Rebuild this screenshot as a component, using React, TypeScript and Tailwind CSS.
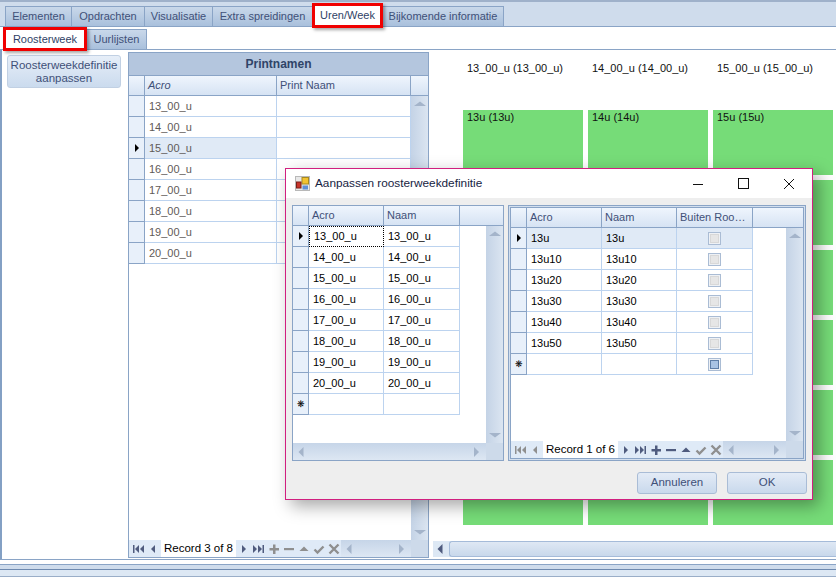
import React from "react";

const DARK = "#4f5b7e";
const GREY = "#8f8f8f";

function NavIcon({ kind, color }: { kind: string; color: string }) {
  const shapes: Record<string, React.ReactNode> = {
    first: <path d="M1 2h1.500v8H1zM7 2v8L3 6zM12 2v8L8 6z" fill={color} />,
    prev: <path d="M8 2v8L4 6z" fill={color} />,
    next: <path d="M4 2v8l4-4z" fill={color} />,
    last: <path d="M0 2v8l4-4zM5 2v8l4-4zM9.500 2H11v8H9.500z" fill={color} />,
    plus: <path d="M5 1.500h2.500V5H11v2.500H7.500V11H5V7.500H1.500V5H5z" fill={color} />,
    minus: <path d="M1 5h10v2.200H1z" fill={color} />,
    up: <path d="M6 3.500l4.500 4.500h-9z" fill={color} />,
    check: <path d="M1.500 6.500l3 3 6-6" stroke={color} strokeWidth="2.400" fill="none" />,
    x: <path d="M1.500 1.500l9 9m0-9l-9 9" stroke={color} strokeWidth="2.400" fill="none" />,
  };
  return (
    <span className="w-[15px] h-full flex items-center justify-center shrink-0">
      <svg width="12" height="12" viewBox="0 0 12 12">{shapes[kind]}</svg>
    </span>
  );
}

function Arrow({ dir, color = "#a4b4ca" }: { dir: "l" | "r" | "u" | "d"; color?: string }) {
  const d = {
    l: "M7.500 1v10L2.500 6z",
    r: "M3 1v10l5-5z",
    u: "M6 3.500L12 8H0z",
    d: "M6 8.500L12 4H0z",
  }[dir];
  return (
    <svg width="12" height="12" viewBox="0 0 12 12" className="shrink-0">
      <path d={d} fill={color} />
    </svg>
  );
}

function Nav({
  label,
  scrollW,
  colors,
}: {
  label: string;
  scrollW: string;
  colors: string[];
}) {
  return (
    <div className="h-[17px] flex shrink-0 items-stretch">
      <div className="w-[32px] flex bg-[#dfeaf7] pl-px">
        <NavIcon kind="first" color={colors[0]} />
        <NavIcon kind="prev" color={colors[1]} />
      </div>
      <div className="w-[75px] bg-white text-black flex items-center justify-center whitespace-nowrap text-[11.500px]">
        {label}
      </div>
      <div className="w-[105px] flex bg-[#dfeaf7]">
        {["next", "last", "plus", "minus", "up", "check", "x"].map((k, i) => (
          <NavIcon key={k} kind={k} color={colors[i + 2]} />
        ))}
      </div>
      <HScroll className={scrollW} />
      <Corner />
    </div>
  );
}

function HScroll({ className }: { className: string }) {
  return (
    <div
      className={`${className} h-full flex items-center justify-between px-[3px] bg-linear-to-b from-[#c6d5e8] to-[#dde7f3]`}
    >
      <Arrow dir="l" />
      <Arrow dir="r" />
    </div>
  );
}

function Corner() {
  return <div className="w-[17px] h-full shrink-0 bg-[#cddaea]" />;
}

function VScroll() {
  return (
    <div className="w-[17px] shrink-0 flex flex-col justify-between items-center py-[2px] bg-linear-to-r from-[#c4d3e6] to-[#dbe5f1]">
      <Arrow dir="u" />
      <Arrow dir="d" />
    </div>
  );
}

function HeadCell({ w, children, italic }: { w: string; children?: React.ReactNode; italic?: boolean }) {
  return (
    <div
      className={`${w} shrink-0 h-full border-r border-[#8aa4c6] pl-[3px] flex items-center text-[#3f5078] whitespace-nowrap ${italic ? "italic" : ""}`}
    >
      {children}
    </div>
  );
}

function Header({ children }: { children: React.ReactNode }) {
  return (
    <div className="h-[20px] shrink-0 flex border-b border-[#8aa4c6] bg-linear-to-b from-[#eff5fd] to-[#d6e3f3]">
      {children}
    </div>
  );
}

function Indicator({ mark }: { mark?: "cur" | "new" }) {
  return (
    <div className="w-[16px] shrink-0 h-full bg-[#e8f0fa] border-r border-b border-[#8aa4c6] flex items-center justify-center">
      {mark === "cur" && (
        <svg width="6" height="8" viewBox="0 0 6 8">
          <path d="M1 0v8l4-4z" fill="#000" />
        </svg>
      )}
      {mark === "new" && <span className="text-[9px] leading-none text-black">❋</span>}
    </div>
  );
}

function Cell({ w, children, bg, focus, color }: { w: string; children?: React.ReactNode; bg?: string; focus?: boolean; color?: string }) {
  return (
    <div
      className={`${w} shrink-0 h-full border-r border-b border-[#bcd3ef] flex items-center pl-[4px] whitespace-nowrap ${bg ?? ""} ${color ?? "text-black"} ${focus ? "border border-dotted border-black" : ""}`}
    >
      {children}
    </div>
  );
}

function Check({ on }: { on?: boolean }) {
  return (
    <div className="w-[13px] h-[13px] border border-[#aabcd4] p-px bg-[#eef1f5]">
      <div className={`w-full h-full border ${on ? "bg-[#a9c3e3] border-[#5f7ea6]" : "bg-[#e6e6e6] border-[#d8d8d8]"}`} />
    </div>
  );
}

const HOURS = ["13_00_u", "14_00_u", "15_00_u", "16_00_u", "17_00_u", "18_00_u", "19_00_u", "20_00_u"];
const SUBS = ["13u", "13u10", "13u20", "13u30", "13u40", "13u50"];

function PrintGrid() {
  return (
    <div className="mt-[2px] h-[506px] w-[301px] shrink-0 border border-[#8aa4c6] flex flex-col bg-white">
      <div className="h-[23px] shrink-0 bg-[#b4c6de] border-b border-[#8aa4c6] flex items-center justify-center font-bold text-[#2f4468] text-[12px]">
        Printnamen
      </div>
      <Header>
        <HeadCell w="w-[16px]" />
        <HeadCell w="w-[132px]" italic>
          Acro
        </HeadCell>
        <HeadCell w="w-[134px]">Print Naam</HeadCell>
      </Header>
      <div className="flex-1 flex min-h-0">
        <div className="flex-1">
          {HOURS.map((h, i) => (
            <div key={h} className="h-[21px] flex">
              <Indicator mark={i === 2 ? "cur" : undefined} />
              <Cell w="w-[132px]" bg={i === 2 ? "bg-[#e0eaf6]" : ""} color="text-[#5f5a58]">
                {h}
              </Cell>
              <Cell w="w-[134px]" />
            </div>
          ))}
        </div>
        <VScroll />
      </div>
      <Nav
        label="Record 3 of 8"
        scrollW="w-[70px]"
        colors={[DARK, DARK, DARK, DARK, GREY, GREY, GREY, GREY, GREY]}
      />
    </div>
  );
}

function DialogLeftGrid() {
  return (
    <div className="w-[212px] h-[256px] shrink-0 border border-[#8aa4c6] flex flex-col bg-white">
      <Header>
        <HeadCell w="w-[16px]" />
        <HeadCell w="w-[75px]">Acro</HeadCell>
        <HeadCell w="w-[76px]">Naam</HeadCell>
      </Header>
      <div className="flex-1 flex min-h-0">
        <div className="flex-1">
          {HOURS.map((h, i) => (
            <div key={h} className="h-[21px] flex">
              <Indicator mark={i === 0 ? "cur" : undefined} />
              <Cell w="w-[75px]" focus={i === 0}>
                {h}
              </Cell>
              <Cell w="w-[76px]">{h}</Cell>
            </div>
          ))}
          <div className="h-[21px] flex">
            <Indicator mark="new" />
            <Cell w="w-[75px]" />
            <Cell w="w-[76px]" />
          </div>
        </div>
        <VScroll />
      </div>
      <div className="h-[17px] flex shrink-0">
        <HScroll className="flex-1" />
        <Corner />
      </div>
    </div>
  );
}

function DialogRightGrid() {
  return (
    <div className="w-[298px] h-[256px] shrink-0 border border-[#8aa4c6] p-px bg-[#d3dfee]">
      <div className="h-full border border-[#8aa4c6] flex flex-col bg-white">
        <Header>
          <HeadCell w="w-[16px]" />
          <HeadCell w="w-[75px]">Acro</HeadCell>
          <HeadCell w="w-[75px]">Naam</HeadCell>
          <HeadCell w="w-[76px]">Buiten Roo…</HeadCell>
        </Header>
        <div className="flex-1 flex min-h-0">
          <div className="flex-1">
            {SUBS.map((s, i) => {
              const bg = i === 0 ? "bg-[#e0eaf6]" : "";
              return (
                <div key={s} className="h-[21px] flex">
                  <Indicator mark={i === 0 ? "cur" : undefined} />
                  <Cell w="w-[75px]" bg={bg}>
                    {s}
                  </Cell>
                  <Cell w="w-[75px]" bg={bg}>
                    {s}
                  </Cell>
                  <Cell w="w-[76px]" bg={bg}>
                    <span className="w-full flex justify-center pr-[4px]">
                      <Check />
                    </span>
                  </Cell>
                </div>
              );
            })}
            <div className="h-[21px] flex">
              <Indicator mark="new" />
              <Cell w="w-[75px]" />
              <Cell w="w-[75px]" />
              <Cell w="w-[76px]">
                <span className="w-full flex justify-center pr-[4px]">
                  <Check on />
                </span>
              </Cell>
            </div>
          </div>
          <VScroll />
        </div>
        <Nav
          label="Record 1 of 6"
          scrollW="w-[63px]"
          colors={[GREY, GREY, DARK, DARK, DARK, DARK, DARK, GREY, GREY]}
        />
      </div>
    </div>
  );
}

function DlgButton({ children }: { children: React.ReactNode }) {
  return (
    <div className="w-[80px] h-[22px] rounded-[3px] border border-[#a9bcd6] bg-linear-to-b from-[#e3ebf6] to-[#c9d9ec] flex items-center justify-center text-[#3f5078] text-[11.500px]">
      {children}
    </div>
  );
}

function Dialog() {
  return (
    <div className="absolute left-[285px] top-[168px] w-[528px] h-[332px] border border-[#d11f7f] bg-[#eeeeee] shadow-[6px_6px_16px_rgba(0,0,0,0.35)] flex flex-col">
      <div className="h-[29px] bg-white flex items-center shrink-0">
        <svg width="15" height="15" viewBox="0 0 15 15" className="ml-[9px]">
          <rect x="0.500" y="0.500" width="14" height="14" fill="#e8e8e8" stroke="#b8b8b8" />
          <rect x="7" y="1.500" width="6.500" height="6.500" fill="#f2c230" stroke="#a88a20" />
          <rect x="1.500" y="6" width="4.500" height="6" fill="#c8342a" stroke="#7a1f18" />
          <rect x="7.500" y="9.500" width="5.500" height="4" fill="#5f8fd6" />
        </svg>
        <span className="ml-[5px] text-[11.800px] text-[#16233f] whitespace-nowrap">Aanpassen roosterweekdefinitie</span>
        <div className="ml-auto flex items-center">
          <svg width="12" height="12" viewBox="0 0 12 12" className="mr-[34px]">
            <path d="M1 6.500h10" stroke="#111" />
          </svg>
          <svg width="12" height="12" viewBox="0 0 12 12" className="mr-[33px]">
            <rect x="0.500" y="0.500" width="10" height="10" fill="none" stroke="#111" />
          </svg>
          <svg width="12" height="12" viewBox="0 0 12 12" className="mr-[17px]">
            <path d="M1 1l10 10M11 1L1 11" stroke="#111" />
          </svg>
        </div>
      </div>
      <div className="flex gap-[4px] pl-[6px] pt-[7px]">
        <DialogLeftGrid />
        <DialogRightGrid />
      </div>
      <div className="flex justify-end gap-[10px] pr-[5px] mt-[11px]">
        <DlgButton>Annuleren</DlgButton>
        <DlgButton>OK</DlgButton>
      </div>
    </div>
  );
}

function Tab({ children, w }: { children: React.ReactNode; w: string }) {
  return (
    <div
      className={`${w} h-[20px] shrink-0 border border-b-0 border-[#8aa4c6] -ml-px first:ml-0 bg-linear-to-b from-[#c9d8ea] to-[#a9c0dc] flex items-center justify-center text-[#3f5078] whitespace-nowrap`}
    >
      {children}
    </div>
  );
}

function RedTab({ children, w, h }: { children: React.ReactNode; w: string; h: string }) {
  return (
    <div
      className={`${w} ${h} shrink-0 relative z-10 border-[3px] border-[#f00000] bg-white shadow-[2px_2px_3px_rgba(0,0,0,0.35)] flex items-center justify-center text-[#2f3f66] whitespace-nowrap`}
    >
      {children}
    </div>
  );
}

export default function App() {
  const cols = ["13", "14", "15"];
  return (
    <div className="relative w-[836px] h-[577px] overflow-hidden bg-white flex flex-col text-[11px] leading-none font-['Liberation_Sans',Arial,sans-serif]">
      <div className="h-[27px] shrink-0 flex items-end pl-[5px] bg-[#cfdcec] border-t-2 border-t-[#9fb1ca] border-b border-b-[#8aa4c6]">
        <Tab w="w-[67px]">Elementen</Tab>
        <Tab w="w-[74px]">Opdrachten</Tab>
        <Tab w="w-[69px]">Visualisatie</Tab>
        <Tab w="w-[101px]">Extra spreidingen</Tab>
        <div className="-mb-[2px] -ml-px">
          <RedTab w="w-[71px]" h="h-[25px]">
            Uren/Week
          </RedTab>
        </div>
        <Tab w="w-[122px]">Bijkomende informatie</Tab>
      </div>
      <div className="h-[23px] shrink-0 flex items-end pl-[3px] border-b border-[#8aa4c6] relative">
        <div className="-mb-[2px]">
          <RedTab w="w-[84px]" h="h-[24px]">
            Roosterweek
          </RedTab>
        </div>
        <Tab w="w-[61px]">Uurlijsten</Tab>
      </div>
      <div className="h-[509px] shrink-0 flex border-l-2 border-[#83a0c4]">
        <div className="w-[126px] shrink-0 pl-[5px] pt-[5px]">
          <div className="w-[114px] h-[33px] rounded-[3px] border border-[#c1d0e3] bg-linear-to-b from-[#e6eef8] to-[#cbdbee] flex items-center justify-center text-center text-[#3f5078] leading-[13px] text-[11.500px]">
            <div>
              Roosterweekdefinitie
              <br />
              aanpassen
            </div>
          </div>
        </div>
        <PrintGrid />
        <div className="flex-1 min-w-0 flex flex-col">
          <div className="pl-[34px] pt-[12px]">
            <div className="grid grid-cols-[120px_120px_120px] gap-x-[5px] h-[48px]">
              {cols.map((c) => (
                <div key={c} className="pl-[4px] pt-px text-[#111] whitespace-nowrap">
                  {`${c}_00_u (${c}_00_u)`}
                </div>
              ))}
            </div>
            <div className="grid grid-cols-[120px_120px_120px] gap-[5px] auto-rows-[65px]">
              {cols.map((c) => (
                <div key={c} className="bg-[#76dc78] pl-[4px] pt-[2px] text-[#111]">
                  {`${c}u (${c}u)`}
                </div>
              ))}
              {Array.from({ length: 15 }).map((_, i) => (
                <div key={i} className="bg-[#76dc78]" />
              ))}
            </div>
          </div>
          <div className="mt-auto mb-[2px] ml-[4px] h-[16px] flex bg-[#dde8f4]">
            <div className="w-[16px] h-full flex items-center justify-center">
              <Arrow dir="l" color={DARK} />
            </div>
            <div className="flex-1 rounded-l-[3px] border border-r-0 border-[#a5bbd9] bg-linear-to-b from-[#dfe8f4] to-[#c8d8eb]" />
          </div>
        </div>
      </div>
      <div className="h-[5px] shrink-0 bg-white border-t border-[#8aa4c6]" />
      <div className="h-[5px] shrink-0 bg-[#cfdcec] border-t border-[#8aa4c6]" />
      <div className="flex-1 bg-[#dde8f4] border-t border-b border-t-[#6e8ab0] border-b-[#9aaec8]" />
      <Dialog />
    </div>
  );
}
